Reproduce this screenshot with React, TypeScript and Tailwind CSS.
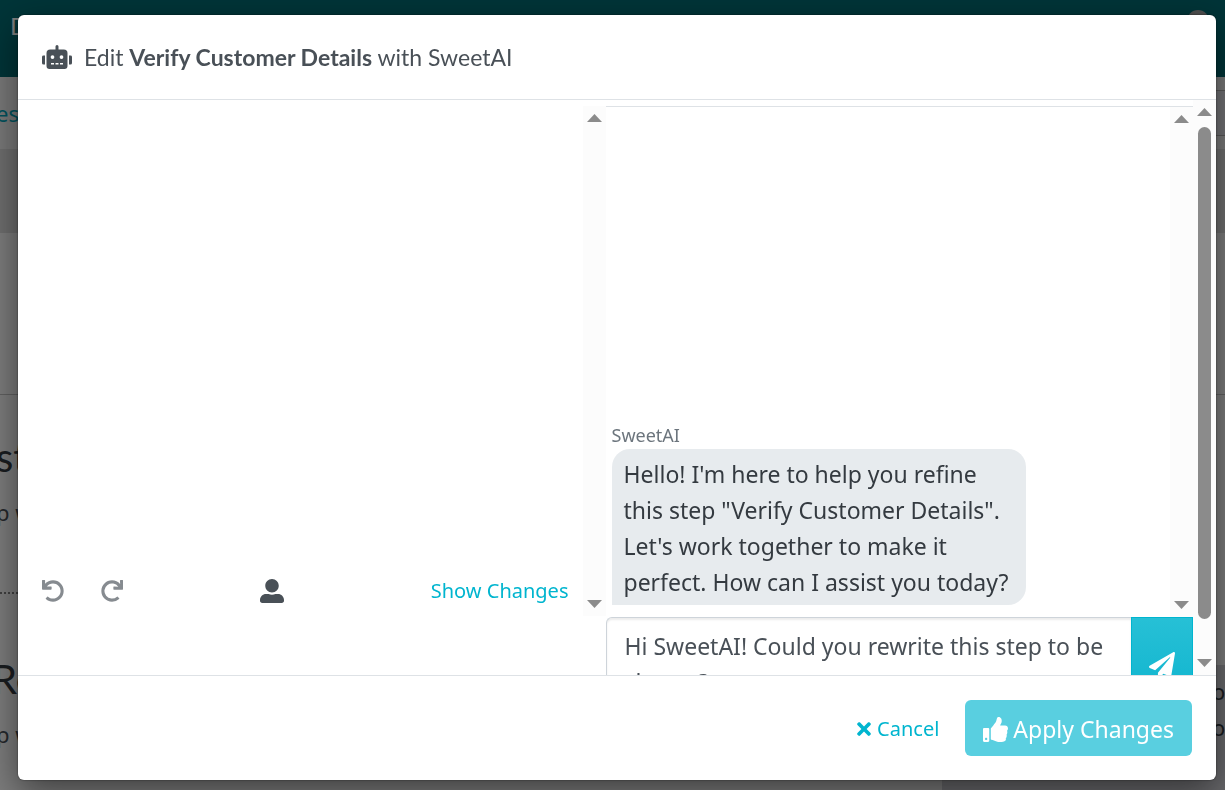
import React from 'react';
import {
  FaPaperPlane,
  FaRedo,
  FaRobot,
  FaThumbsUp,
  FaTimes,
  FaUndo,
  FaUserAlt,
} from 'react-icons/fa';

interface ScrollRailProps {
  className?: string;
  children?: React.ReactNode;
}

function ScrollRail({ className = '', children }: ScrollRailProps) {
  return (
    <div
      aria-hidden="true"
      className={`flex w-[23px] shrink-0 flex-col items-center justify-between bg-[#fcfcfc] py-2 ${className}`}
    >
      <svg width="15" height="8" viewBox="0 0 15 8" className="shrink-0" fill="#8b8b8b">
        <path d="M7.5 0L15 8H0z" />
      </svg>
      {children}
      <svg width="15" height="8" viewBox="0 0 15 8" className="shrink-0" fill="#8b8b8b">
        <path d="M7.5 8L0 0h15z" />
      </svg>
    </div>
  );
}

function BackgroundPage() {
  return (
    <div
      aria-hidden="true"
      className="flex h-screen flex-col overflow-hidden bg-[#f8f8f8] whitespace-nowrap text-[#495057]"
    >
      <div className="flex h-[77px] shrink-0 items-start justify-between bg-[#006970] px-[10px] pt-[10px] font-['Lato',sans-serif] text-2xl leading-8 text-white">
        <span>D</span>
        <span className="mr-[6px] size-[22px] rounded-full bg-[#a0a0a0]" />
      </div>
      <div className="flex h-[72px] shrink-0 items-center justify-between bg-[#f2f2f2] text-[22px] text-[#00a5bb]">
        <span className="-ml-1">es</span>
        <span className="h-[46px] w-40 border-y border-[#b0b0b0] bg-[#e2e2e8]" />
      </div>
      <div className="h-[84px] shrink-0 bg-[#dcdcdc]" />
      <div className="h-[161px] shrink-0" />
      <div className="flex min-h-0 flex-1 border-t border-[#c0c0c0]">
        <div className="-ml-1 flex-1">
          <div className="h-[199px] border-b-2 border-dotted border-[#808080] pt-[38px]">
            <p className="font-['Lato',sans-serif] text-[40px] leading-[48px] text-[#343a40]">st</p>
            <p className="mt-[15px] text-[22px] leading-8">p w</p>
          </div>
          <div className="-ml-1 pt-[61px]">
            <p className="font-['Lato',sans-serif] text-[40px] leading-[48px] text-[#343a40]">Re</p>
            <p className="mt-[15px] ml-1 text-[22px] leading-8">p w</p>
          </div>
        </div>
        <div className="mt-[270px] w-[283px] bg-[#d0d0d6] pt-2 text-[22px] leading-9 text-[#343a40]">
          <p className="ml-[270px]">ou</p>
          <p className="ml-[270px]">or</p>
        </div>
      </div>
    </div>
  );
}

export default function App() {
  return (
    <div className="font-['Noto_Sans',sans-serif]">
      <BackgroundPage />

      <div className="fixed inset-0 flex bg-black/50 pt-[15px] pr-[9px] pb-[10px] pl-[18px]">
        <div
          role="dialog"
          aria-labelledby="dialog-title"
          className="flex min-w-0 flex-1 flex-col overflow-hidden rounded-md bg-white shadow-[0_12px_36px_rgba(0,0,0,0.5),0_0_2px_rgba(0,0,0,0.6)]"
        >
          {/* Header */}
          <div className="flex items-center gap-3 border-b border-[#dee2e6] px-6 py-[26px] text-[#495057]">
            <FaRobot size={30} className="h-6" />
            <h1 id="dialog-title" className="font-['Lato',sans-serif] text-[23px] leading-8">
              Edit <strong className="font-bold">Verify Customer Details</strong> with SweetAI
            </h1>
          </div>

          {/* Body */}
          <div className="flex min-h-0 flex-1 overflow-hidden">
            <div className="flex min-w-0 flex-1 pt-[6px]">
              {/* Step preview */}
              <div className="flex h-[510px] min-w-0 flex-1">
                <div className="flex flex-1 items-end justify-between pr-[14px] pb-[7px] pl-6">
                  <div className="flex h-9 items-center gap-[37px] text-[#868b90]">
                    <button type="button" aria-label="Undo">
                      <FaUndo size={22} />
                    </button>
                    <button type="button" aria-label="Redo">
                      <FaRedo size={22} />
                    </button>
                  </div>
                  <button
                    type="button"
                    aria-label="Author"
                    className="mr-[10px] flex h-9 items-center text-[#495057]"
                  >
                    <FaUserAlt size={24} />
                  </button>
                  <button type="button" className="text-[20px] leading-9 text-[#00b5cf]">
                    Show Changes
                  </button>
                </div>
                <ScrollRail />
              </div>

              {/* Chat */}
              <div className="min-w-0 flex-1">
                <div className="flex h-[511px] border-t border-[#dee2e6]">
                  <div className="flex flex-1 flex-col items-start justify-end pb-3 pl-[6px]">
                    <p className="text-[18px] leading-7 text-[#6c757d]">SweetAI</p>
                    <p className="w-[414px] rounded-[18px] rounded-bl-none bg-[#e7ebee] px-3 pt-[7px] pb-[5px] text-[23px] leading-9 text-[#343a40]">
                      Hello! I'm here to help you refine this step "Verify Customer Details". Let's work
                      together to make it perfect. How can I assist you today?
                    </p>
                  </div>
                  <ScrollRail />
                </div>
                <div className="flex h-[110px]">
                  <textarea
                    aria-label="Message"
                    className="min-w-0 flex-1 resize-none overflow-hidden rounded-l-md border border-r-0 border-[#ced4da] px-[18px] py-[10px] text-[23px] leading-9 text-[#495057] shadow-[inset_0_2px_2px_rgba(0,0,0,0.08)] outline-none"
                    defaultValue="Hi SweetAI! Could you rewrite this step to be clearer?"
                  />
                  <button
                    type="button"
                    aria-label="Send"
                    className="flex w-[62px] justify-center border border-[#00b5cf] bg-linear-to-b from-[#26c0d6] to-[#00b1cc] pt-[34px] text-white"
                  >
                    <FaPaperPlane size={26} />
                  </button>
                </div>
              </div>
            </div>
            <ScrollRail>
              <div className="mt-[11px] mb-10 w-[13px] flex-1 rounded-full bg-[#8b8b8b]" />
            </ScrollRail>
          </div>

          {/* Footer */}
          <div className="flex items-center justify-end gap-[26px] border-t border-[#dee2e6] p-6">
            <button type="button" className="flex items-center gap-[3px] pt-[2px] text-[20px] text-[#00b5cf]">
              <FaTimes size={20} />
              Cancel
            </button>
            <button
              type="button"
              className="flex h-14 items-center gap-[5px] rounded-md bg-[#59cfe0] px-[18px] pt-[2px] text-[23px] text-white"
            >
              <FaThumbsUp size={25} />
              Apply Changes
            </button>
          </div>
        </div>
      </div>
    </div>
  );
}
